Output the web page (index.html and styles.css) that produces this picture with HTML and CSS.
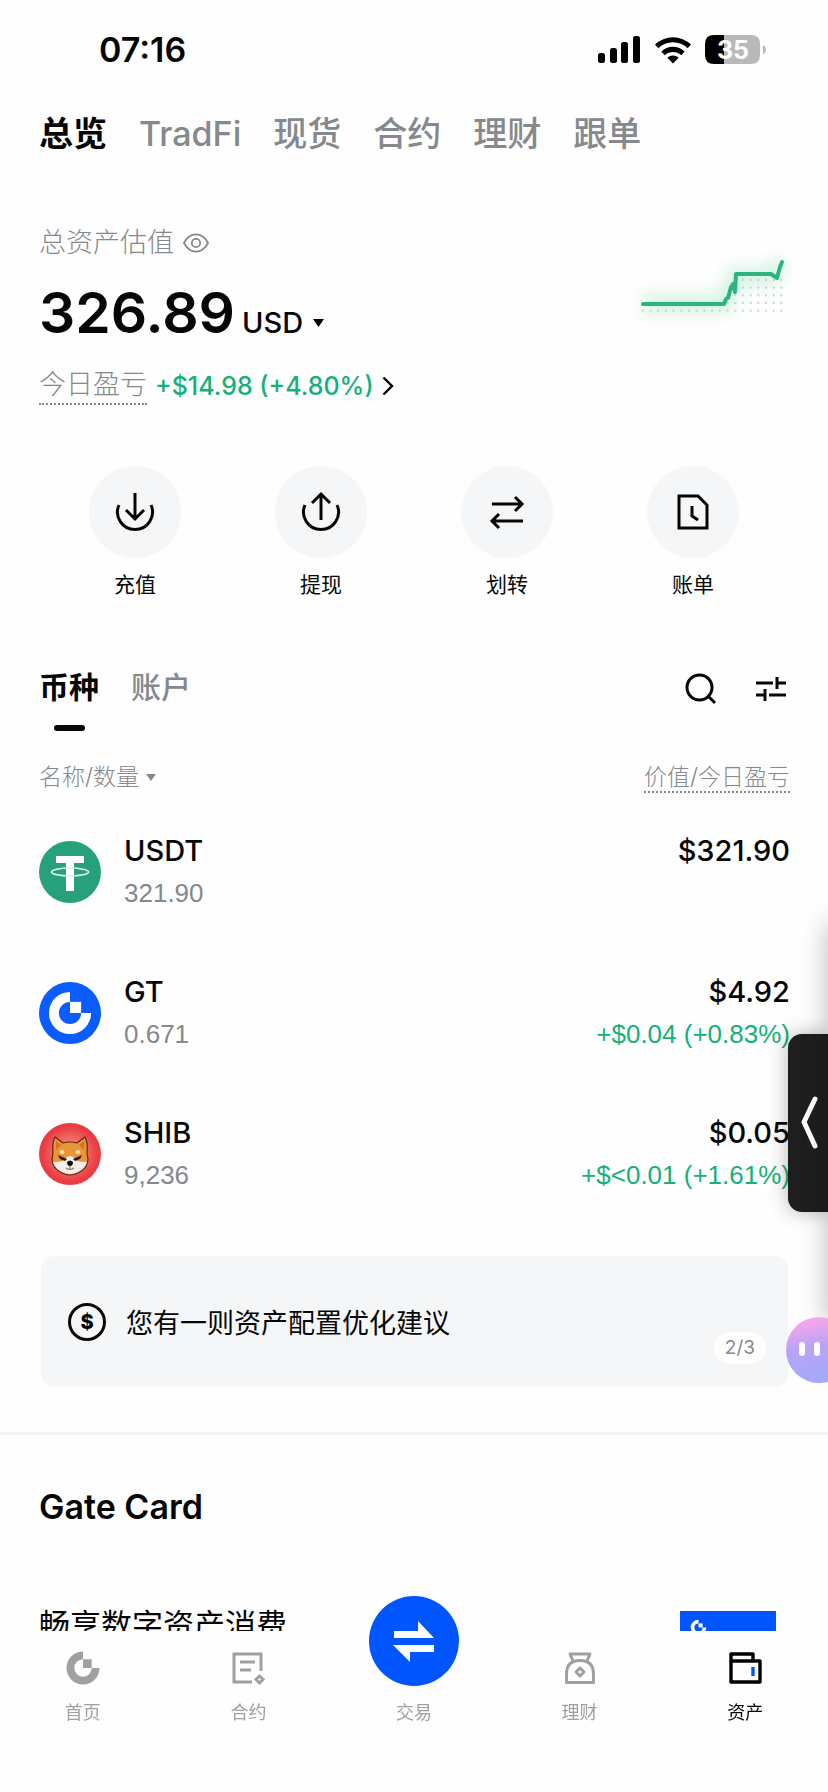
FILE: index.html
```html
<!DOCTYPE html>
<html lang="zh-CN">

<head>
    <meta charset="UTF-8" />
    <meta name="viewport" content="width=device-width, initial-scale=1.0" />
    <title>资产总览</title>
    <link rel="stylesheet" href="styles.css">
</head>

<body>
    <svg class="sprite" aria-hidden="true">
        <symbol id="gate-logo" viewBox="0 0 24 24">
            <path d="M12 1A11 11 0 1 0 23 12H17.8A5.8 5.8 0 1 1 12 6.2Z" />
            <path d="M12 6.2H17.8V12H12Z" />
        </symbol>
    </svg>

    <div class="status-bar">
        <span class="time">07:16</span>
        <div class="status-icons">
            <svg width="44" height="28" viewBox="0 0 44 28">
                <rect x="1" y="17" width="7" height="10" rx="2.5" />
                <rect x="13" y="12" width="7" height="15" rx="2.5" />
                <rect x="24" y="6" width="7" height="21" rx="2.5" />
                <rect x="36" y="0" width="7" height="27" rx="2.5" />
            </svg>
            <svg width="38" height="28" viewBox="0 0 38 28">
                <path d="M1 8.5A26 26 0 0 1 37 8.5L33.600 12.200A21 21 0 0 0 4.400 12.200Z" />
                <path d="M7.300 15.500A17 17 0 0 1 30.700 15.500L27.200 19.200A12 12 0 0 0 10.800 19.200Z" />
                <path d="M13.300 21.800A8.500 8.500 0 0 1 24.700 21.800L19 27.600Z" />
            </svg>
            <svg class="battery" width="62" height="30" viewBox="0 0 62 30">
                <path fill="#b9b9b9" d="M19 0H46Q55 0 55 9V20Q55 29 46 29H19Z" />
                <path d="M19 0H9Q0 0 0 9V20Q0 29 9 29H19Z" />
                <path fill="#b9b9b9" d="M58 10Q61 11.500 61 14.500T58 19Z" />
                <text x="28" y="24" text-anchor="middle">35</text>
            </svg>
        </div>
    </div>

    <nav class="top-tabs">
        <a href="#" class="active">总览</a>
        <a href="#">TradFi</a>
        <a href="#">现货</a>
        <a href="#">合约</a>
        <a href="#">理财</a>
        <a href="#">跟单</a>
    </nav>

    <main>
        <section class="assets">
            <div>
                <div class="assets-label">
                    总资产估值
                    <button type="button" aria-label="隐藏金额">
                        <svg width="26" height="20" viewBox="0 0 26 20" fill="none" stroke="#85888c" stroke-width="1.800">
                            <path d="M1 10C7-1.500 19-1.500 25 10C19 21.500 7 21.500 1 10Z" />
                            <circle cx="13" cy="10" r="4.200" />
                        </svg>
                    </button>
                </div>
                <div class="balance">
                    <span class="amount">326.89</span>
                    <button type="button" class="currency">USD
                        <svg width="11" height="8" viewBox="0 0 11 8"><path d="M0 0H11L5.500 8Z" /></svg>
                    </button>
                </div>
                <a href="#" class="pnl">
                    <span class="dotted">今日盈亏</span>
                    <span class="up">+$14.98 (+4.80%)</span>
                    <svg width="12" height="20" viewBox="0 0 12 20" fill="none" stroke="#000" stroke-width="2.400">
                        <path d="M1.500 1.500L10 10L1.500 18.500" />
                    </svg>
                </a>
            </div>
            <svg class="trend" width="160" height="80" viewBox="0 0 160 80">
                <defs>
                    <pattern id="dots" x="6" y="3" width="7.700" height="7.700" patternUnits="userSpaceOnUse">
                        <circle cx="3.800" cy="3.800" r="1.100" fill="#c6cdca" />
                    </pattern>
                    <filter id="glow" x="-20%" y="-60%" width="140%" height="220%">
                        <feGaussianBlur stdDeviation="8" />
                    </filter>
                </defs>
                <path class="trend-glow" filter="url(#glow)" d="M10 54H91L103 26H138L148 13" />
                <path fill="url(#dots)" d="M8 54H91L103 24H151V62H8Z" />
                <path class="trend-line" d="M10 54H91L93 49L95 48L98 37L100 34L102 42L103 24H138L144 28L147 17L149 12" />
            </svg>
        </section>

        <section class="actions">
            <button type="button">
                <span class="circle">
                    <svg width="42" height="42" viewBox="0 0 42 42">
                        <path d="M5 14A17.500 17.500 0 1 0 37 14M21 2V28M12 19L21 28L30 19" />
                    </svg>
                </span>
                充值
            </button>
            <button type="button">
                <span class="circle">
                    <svg width="42" height="42" viewBox="0 0 42 42">
                        <path d="M5 14A17.500 17.500 0 1 0 37 14M21 29V3M12 12L21 3L30 12" />
                    </svg>
                </span>
                提现
            </button>
            <button type="button">
                <span class="circle">
                    <svg width="42" height="42" viewBox="0 0 42 42">
                        <path d="M6 13H36M29 6L36 13L29 20M37 30H6M13 23L6 30L13 37" />
                    </svg>
                </span>
                划转
            </button>
            <button type="button">
                <span class="circle">
                    <svg width="42" height="42" viewBox="0 0 42 42">
                        <path d="M7 5H26L35 14V37H7ZM20 15V25L26 29" />
                    </svg>
                </span>
                账单
            </button>
        </section>

        <section class="holdings">
            <div class="holdings-bar">
                <div class="list-tabs">
                    <button type="button" class="active">币种</button>
                    <button type="button">账户</button>
                </div>
                <div class="tools">
                    <button type="button" aria-label="搜索">
                        <svg width="32" height="32" viewBox="0 0 32 32">
                            <circle cx="14.500" cy="14.500" r="12.500" />
                            <path d="M23.500 23.500L30 30" />
                        </svg>
                    </button>
                    <button type="button" aria-label="筛选">
                        <svg width="32" height="32" viewBox="0 0 32 32">
                            <path d="M1 10H18M22 10H31M22 4V16M1 22H10M14 22H31M10 16V28" />
                        </svg>
                    </button>
                </div>
            </div>

            <table>
                <thead>
                    <tr>
                        <th>
                            <button type="button">名称/数量
                                <svg width="10" height="7" viewBox="0 0 10 7"><path d="M0 0H10L5 7Z" /></svg>
                            </button>
                        </th>
                        <th><span class="dotted">价值/今日盈亏</span></th>
                    </tr>
                </thead>
                <tbody>
                    <tr>
                        <td>
                            <div class="coin">
                                <svg width="62" height="62" viewBox="0 0 62 62">
                                    <circle cx="31" cy="31" r="31" fill="#26a17b" />
                                    <path fill="#fff" d="M17 15H45V22H35V50H27V22H17Z" />
                                    <ellipse cx="31" cy="31" rx="18.500" ry="4" fill="none" stroke="#e3f4ee" stroke-width="1.600" />
                                </svg>
                                <div>
                                    <div class="name">USDT</div>
                                    <div class="sub">321.90</div>
                                </div>
                            </div>
                        </td>
                        <td>
                            <div class="name">$321.90</div>
                            <div class="sub">&nbsp;</div>
                        </td>
                    </tr>
                    <tr>
                        <td>
                            <div class="coin">
                                <svg width="62" height="62" viewBox="0 0 62 62">
                                    <circle cx="31" cy="31" r="31" fill="#0a5cff" />
                                    <use href="#gate-logo" x="8" y="8" width="46" height="46" fill="#fff" />
                                </svg>
                                <div>
                                    <div class="name">GT</div>
                                    <div class="sub">0.671</div>
                                </div>
                            </div>
                        </td>
                        <td>
                            <div class="name">$4.92</div>
                            <div class="sub up">+$0.04 (+0.83%)</div>
                        </td>
                    </tr>
                    <tr>
                        <td>
                            <div class="coin">
                                <svg width="62" height="62" viewBox="0 0 62 62">
                                    <defs>
                                        <radialGradient id="shib-bg">
                                            <stop offset="0.400" stop-color="#f2776f" />
                                            <stop offset="0.900" stop-color="#ea3c42" />
                                        </radialGradient>
                                    </defs>
                                    <circle cx="31" cy="31" r="31" fill="url(#shib-bg)" />
                                    <path fill="#ec9534" stroke="#5b2a14" stroke-width="1.200" stroke-linejoin="round"
                                        d="M16 14L24 20Q31 18 38 20L46 14Q49 20 48 29L49 37Q48 46 39 50Q31 54 23 50Q14 46 13 37L14 29Q13 20 16 14Z" />
                                    <path fill="#d9702a" d="M17 18L22 22L17 27ZM45 18L40 22L45 27Z" />
                                    <path fill="#f3eeea" d="M14 39Q20 39 24 38L28 34Q31 32 34 34L38 38Q42 39 48 39Q46 46 39 49Q31 53 23 49Q16 46 14 39Z" />
                                    <ellipse cx="23" cy="29" rx="2.500" ry="2" fill="#fbe3b8" />
                                    <ellipse cx="39" cy="29" rx="2.500" ry="2" fill="#fbe3b8" />
                                    <path fill="#2b1710" d="M19 32L28 36L26 38L21 36ZM43 32L34 36L36 38L41 36Z" />
                                    <path fill="#0c0a0a" d="M28 39Q31 36 34 39Q34 43 31 43Q28 43 28 39Z" />
                                    <path fill="none" stroke="#8d7a78" stroke-width="1.200" d="M31 43V46M27 45Q31 48 35 45" />
                                </svg>
                                <div>
                                    <div class="name">SHIB</div>
                                    <div class="sub">9,236</div>
                                </div>
                            </div>
                        </td>
                        <td>
                            <div class="name">$0.05</div>
                            <div class="sub up">+$&lt;0.01 (+1.61%)</div>
                        </td>
                    </tr>
                </tbody>
            </table>
        </section>

        <a href="#" class="notice">
            <svg width="40" height="40" viewBox="0 0 40 40">
                <circle cx="20" cy="20" r="17.500" fill="none" stroke="#0b0b0b" stroke-width="3" />
                <text x="20" y="27" text-anchor="middle">$</text>
            </svg>
            <span>您有一则资产配置优化建议</span>
            <span class="page">2/3</span>
        </a>

        <section class="gate-card">
            <h2>Gate Card</h2>
            <div class="card-row">
                <p>畅享数字资产消费</p>
                <svg width="96" height="60" viewBox="0 0 96 60">
                    <rect width="96" height="60" fill="#0055ff" />
                    <use href="#gate-logo" x="10" y="8" width="17" height="17" fill="#fff" />
                </svg>
            </div>
        </section>
    </main>

    <button type="button" class="drawer" aria-label="展开侧栏">
        <svg width="18" height="54" viewBox="0 0 18 54" fill="none" stroke="#fff" stroke-width="5"
            stroke-linecap="round" stroke-linejoin="round">
            <path d="M14 3L3 26L14 50" />
        </svg>
    </button>
    <button type="button" class="assistant" aria-label="助手"><i></i><i></i></button>

    <nav class="bottom-nav">
        <a href="#">
            <svg width="36" height="36" viewBox="0 0 36 36"><use href="#gate-logo" x="0" y="0" width="36" height="36" fill="#9fa0a2" /></svg>
            首页
        </a>
        <a href="#">
            <svg width="36" height="36" viewBox="0 0 36 36" fill="none" stroke="#9fa0a2" stroke-width="3">
                <path d="M22 32H4V4H31V21M10 12H25M10 20H21" />
                <path d="M29.500 26L33 29.500L29.500 33L26 29.500Z" />
            </svg>
            合约
        </a>
        <a href="#" class="trade">
            <span class="trade-circle">
                <svg width="44" height="44" viewBox="0 0 44 44" fill="#fff">
                    <path d="M2 12H26V2L42 19H2ZM42 33V26H1L18 43V33Z" />
                </svg>
            </span>
            交易
        </a>
        <a href="#">
            <svg width="36" height="36" viewBox="0 0 36 36" fill="none" stroke="#9fa0a2" stroke-width="3" stroke-linejoin="round">
                <path d="M11 11L8 4H28L25 11M4.500 32.500V24Q4.500 10.500 18 10.500T31.500 24V32.500Z" />
                <path d="M18 18L22 22L18 26L14 22Z" />
            </svg>
            理财
        </a>
        <a href="#" class="active">
            <svg width="36" height="36" viewBox="0 0 36 36" fill="none" stroke="#000" stroke-width="3.400" stroke-linejoin="round">
                <path d="M4 11V4H26V11M4 11H33V32H4Z" />
                <path stroke="#0055ff" d="M26 17V26" />
            </svg>
            资产
        </a>
    </nav>
</body>

</html>
```

FILE: styles.css
```css
* {
    box-sizing: border-box;
}

body {
    margin: 0;
    height: 100vh;
    overflow: hidden;
    font-family: Inter, 'Noto Sans CJK SC', sans-serif;
    background-color: #fefefe;
    color: #060606;
}

a {
    color: inherit;
    text-decoration: none;
}

button {
    padding: 0;
    border: none;
    background: none;
    font: inherit;
    color: inherit;
    cursor: pointer;
}

svg {
    display: block;
    flex-shrink: 0;
}

.sprite {
    display: none;
}

.up {
    color: #16b07b;
}

.dotted {
    border-bottom: 2px dotted #85888c;
}

/* status bar */
.status-bar {
    display: flex;
    justify-content: space-between;
    align-items: center;
    height: 99px;
    padding: 0 61px 0 99px;
}

.time {
    font-size: 34px;
    font-weight: 600;
}

.status-icons {
    display: flex;
    align-items: center;
    gap: 13px;
}

.battery text {
    font-size: 25px;
    font-weight: 700;
    fill: #fff;
}

/* top tabs */
.top-tabs {
    display: flex;
    align-items: center;
    gap: 32px;
    height: 70px;
    padding: 0 39px;
    font-size: 34px;
    font-weight: 500;
    line-height: 48px;
    color: #85888c;
}

.top-tabs .active {
    font-weight: 700;
    color: #060606;
}

/* total assets */
.assets {
    display: flex;
    justify-content: space-between;
    padding: 54px 39px 0;
}

.assets-label {
    display: flex;
    align-items: center;
    gap: 9px;
    font-size: 27px;
    font-weight: 300;
    line-height: 40px;
    color: #85888c;
}

.balance {
    display: flex;
    align-items: baseline;
    gap: 7px;
    margin-top: 18px;
    line-height: 64px;
}

.amount {
    font-size: 57px;
    font-weight: 600;
}

.currency {
    display: flex;
    align-items: center;
    gap: 10px;
    font-size: 29px;
    font-weight: 500;
}

.pnl {
    display: flex;
    align-items: center;
    gap: 8px;
    margin-top: 12px;
    font-size: 25px;
    font-weight: 500;
    line-height: 36px;
}

.pnl .dotted {
    font-size: 27px;
    font-weight: 300;
    color: #85888c;
}

.trend {
    margin: 27px -4px 0 0;
}

.trend-line {
    fill: none;
    stroke: #2bb57e;
    stroke-width: 4;
    stroke-linecap: round;
    stroke-linejoin: round;
}

.trend-glow {
    fill: none;
    stroke: #d3f3e3;
    stroke-width: 18;
}

/* quick actions */
.actions {
    display: grid;
    grid-template-columns: repeat(4, 1fr);
    padding: 61px 42px 0;
}

.actions button {
    display: flex;
    flex-direction: column;
    align-items: center;
    gap: 13px;
    font-size: 21px;
    line-height: 28px;
}

.circle {
    display: flex;
    align-items: center;
    justify-content: center;
    width: 92px;
    height: 92px;
    border-radius: 50%;
    background-color: #f4f6f8;
}

.circle svg,
.tools svg {
    fill: none;
    stroke: #060606;
    stroke-width: 3;
}

/* holdings */
.holdings {
    padding: 66px 38px 0 39px;
}

.holdings-bar {
    display: flex;
    justify-content: space-between;
    align-items: flex-start;
}

.list-tabs {
    display: flex;
    gap: 32px;
    font-size: 30px;
    font-weight: 500;
    line-height: 44px;
    color: #85888c;
}

.list-tabs .active {
    font-weight: 700;
    color: #060606;
}

.list-tabs button::after {
    content: '';
    display: block;
    width: 31px;
    height: 6px;
    margin: 16px auto 0;
    border-radius: 3px;
}

.list-tabs .active::after {
    background-color: #060606;
}

.tools {
    display: flex;
    gap: 38px;
    padding-top: 8px;
    margin-right: 3px;
}

table {
    width: 100%;
    border-collapse: collapse;
}

th,
td {
    padding: 0;
    text-align: left;
}

th:last-child,
td:last-child {
    text-align: right;
}

th {
    height: 70px;
    padding-top: 22px;
    font-size: 23px;
    font-weight: 300;
    line-height: 30px;
    color: #85888c;
}

th button {
    display: flex;
    align-items: center;
    gap: 7px;
}

th svg {
    fill: #85888c;
}

td {
    height: 141px;
}

.coin {
    display: flex;
    align-items: center;
    gap: 23px;
}

.name {
    font-size: 29px;
    font-weight: 500;
    line-height: 42px;
}

.sub {
    font-family: 'Liberation Sans', Arial, sans-serif;
    font-size: 26px;
    line-height: 42px;
}

.sub:not(.up) {
    color: #85888c;
}

/* notice */
.notice {
    display: flex;
    align-items: center;
    gap: 19px;
    height: 131px;
    margin: 32px 40px 0 41px;
    padding: 0 22px 0 26px;
    border-radius: 14px;
    background-color: #f4f6f8;
    font-size: 27px;
}

.notice text {
    font-size: 20px;
    font-weight: 800;
}

.page {
    align-self: flex-end;
    margin: 0 0 23px auto;
    padding: 0 11px;
    border-radius: 16px;
    background-color: #fefefe;
    font-size: 19px;
    line-height: 32px;
    color: #85888c;
}

/* gate card */
.gate-card {
    margin-top: 45px;
    padding: 52px 52px 0 39px;
    border-top: 3px solid #f4f5f6;
}

h2 {
    margin: 0;
    font-size: 34px;
    font-weight: 600;
    line-height: 40px;
}

.card-row {
    display: flex;
    justify-content: space-between;
    align-items: flex-start;
    margin-top: 76px;
}

.card-row p {
    margin: 0;
    font-size: 31px;
    line-height: 44px;
}

.card-row svg {
    margin-top: 8px;
}

/* floating controls */
.drawer {
    position: fixed;
    right: 0;
    top: 1034px;
    display: flex;
    align-items: center;
    justify-content: center;
    width: 40px;
    height: 178px;
    padding-left: 4px;
    border-radius: 14px 0 0 14px;
    background-color: #1e1e1e;
    box-shadow: 0 0 20px rgba(0, 0, 0, 0.3);
}

/* shadow of the panel hidden past the screen edge */
.drawer::before {
    content: '';
    position: absolute;
    left: 100%;
    top: -110px;
    width: 20px;
    height: 398px;
    box-shadow: 0 0 26px rgba(0, 0, 0, 0.3);
}

.assistant {
    position: fixed;
    right: -24px;
    top: 1317px;
    display: flex;
    gap: 9px;
    width: 66px;
    height: 66px;
    padding: 25px 0 0 13px;
    border-radius: 50%;
    background: linear-gradient(170deg, #f5a6ec 10%, #b9a3f6 45%, #a6a8fa 80%);
}

.assistant i {
    width: 6px;
    height: 14px;
    border-radius: 3px;
    background-color: #fff;
}

/* bottom navigation */
.bottom-nav {
    position: fixed;
    left: 0;
    right: 0;
    bottom: 0;
    display: grid;
    grid-template-columns: repeat(5, 1fr);
    height: 161px;
    padding-top: 19px;
    background-color: #fefefe;
    box-shadow: 0 -2px 6px rgba(0, 0, 0, 0.02);
    font-size: 18px;
    line-height: 26px;
    color: #9fa0a2;
}

.bottom-nav a {
    display: flex;
    flex-direction: column;
    align-items: center;
    gap: 14px;
}

.bottom-nav .active {
    color: #060606;
}

.trade-circle {
    display: flex;
    align-items: center;
    justify-content: center;
    width: 90px;
    height: 90px;
    margin-top: -54px;
    border-radius: 50%;
    background-color: #0055ff;
}
```
